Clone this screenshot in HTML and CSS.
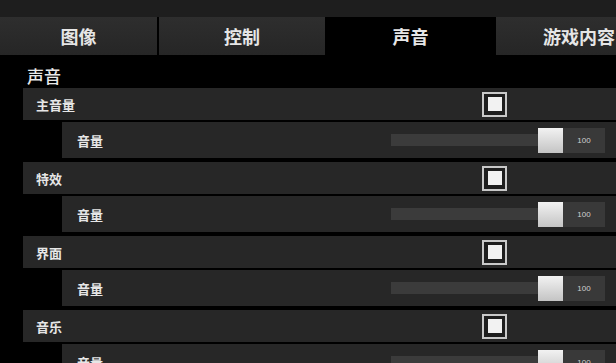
FILE: index.html
```html
<!DOCTYPE html>
<html lang="zh">
<head>
<meta charset="utf-8">
<link rel="stylesheet" href="styles.css">
</head>
<body>
<div class="topbar"></div>
<div class="tabs">
  <div class="tab tab-first">图像</div>
  <div class="tab">控制</div>
  <div class="tab active">声音</div>
  <div class="tab">游戏内容</div>
</div>
<div class="content">
  <div class="heading">声音</div>

  <div class="row main"><span class="label">主音量</span><span class="check"><span class="check-in"></span></span></div>
  <div class="row sub"><span class="label">音量</span><span class="track"></span><span class="handle"></span><span class="value">100</span></div>

  <div class="row main"><span class="label">特效</span><span class="check"><span class="check-in"></span></span></div>
  <div class="row sub"><span class="label">音量</span><span class="track"></span><span class="handle"></span><span class="value">100</span></div>

  <div class="row main"><span class="label">界面</span><span class="check"><span class="check-in"></span></span></div>
  <div class="row sub"><span class="label">音量</span><span class="track"></span><span class="handle"></span><span class="value">100</span></div>

  <div class="row main"><span class="label">音乐</span><span class="check"><span class="check-in"></span></span></div>
  <div class="row sub"><span class="label">音量</span><span class="track"></span><span class="handle"></span><span class="value">100</span></div>
</div>
</body>
</html>
```

FILE: styles.css
```css
html, body {
  margin: 0;
  padding: 0;
  background: #000;
  width: 616px;
  height: 363px;
  overflow: hidden;
  font-family: "Noto Sans CJK SC", "Noto Sans", sans-serif;
  color: #eee;
}

.topbar {
  height: 17px;
  background: #1e1e1e;
}

.tabs {
  display: flex;
  gap: 2px;
  height: 38px;
  overflow: hidden;
}

.tab {
  flex: 0 0 166px;
  background: linear-gradient(#2e2e2e, #262626);
  display: flex;
  align-items: center;
  justify-content: center;
  font-size: 18px;
  font-weight: 700;
  color: #e6e6e6;
}

.tab-first {
  flex-basis: 157px;
}

.tab.active {
  flex-basis: 167px;
  background: #000;
}

.content {
  padding-left: 23px;
}

.heading {
  margin-top: 11px;
  margin-bottom: 2px;
  padding-left: 4px;
  height: 20px;
  line-height: 20px;
  font-size: 17px;
  font-weight: 500;
  color: #e8e8e8;
}

.row {
  display: grid;
  align-items: center;
  background: #272727;
  font-size: 13px;
  font-weight: 700;
}

.row .label {
  color: #e6e6e6;
}

.main {
  height: 32px;
  margin-bottom: 2px;
  grid-template-columns: 459px 25px 1fr;
}

.main .label {
  padding-left: 13px;
}

.check {
  width: 21px;
  height: 21px;
  border: 2px solid #c9c9c9;
  background: #1e1e1e;
  display: flex;
  align-items: center;
  justify-content: center;
}

.check-in {
  width: 14px;
  height: 14px;
  background: #f2f2f2;
}

.sub {
  height: 36px;
  margin-left: 39px;
  margin-bottom: 4px;
  grid-template-columns: 329px 147px 25px 42px 1fr;
}

.sub .label {
  padding-left: 15px;
}

.track {
  height: 12px;
  background: #3b3b3b;
}

.handle {
  height: 25px;
  background: linear-gradient(#f2f2f2, #c4c4c4);
}

.value {
  height: 25px;
  background: #393939;
  color: #cfcfcf;
  font-family: "Liberation Sans", Arial, sans-serif;
  font-size: 8px;
  font-weight: 400;
  display: flex;
  align-items: center;
  justify-content: center;
}
```
